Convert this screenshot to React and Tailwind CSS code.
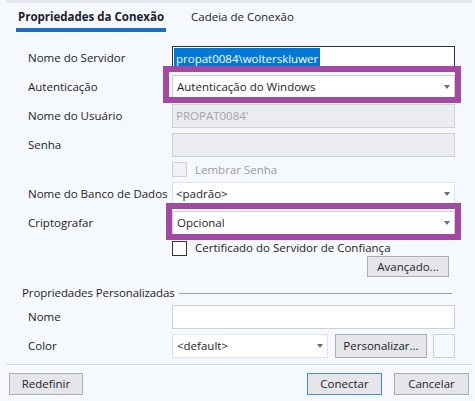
export default function App() {
    const arrow = (
        <span className="ml-auto mr-[4px] w-0 h-0 border-l-[3px] border-r-[3px] border-t-[4px] border-l-transparent border-r-transparent border-t-[#6f6f6f]" />
    );

    return (
        <div className="relative w-[475px] h-[401px] bg-[#f5f8fc] overflow-hidden font-['Open_Sans',sans-serif] text-[11.5px] text-[#1e1e1e]">
            <div className="ml-[6px] w-[466px] h-[3px] bg-[#e3e6ee]" />

            {/* tabs */}
            <div className="flex h-[29px] pl-[16px]">
                <div className="w-[150px] flex items-center justify-center pt-[2px] border-b-4 border-[#1b6ec2] font-bold text-[#1c1c2c]">
                    Propriedades da Conexão
                </div>
                <div className="ml-[25px] flex items-center pt-[2px] pb-[4px]">Cadeia de Conexão</div>
            </div>

            <div className="pl-[28px] mt-[14px]">
                <div className="flex items-center h-6">
                    <div className="w-[144px]">Nome do Servidor</div>
                    <div className="w-[283px] h-6 flex items-center bg-white border border-[#333] pl-[1px]">
                        <span className="h-[21px] leading-[21px] px-[2px] bg-[#0078d7] text-white">propat0084\wolterskluwer</span>
                    </div>
                </div>
                <div className="flex items-center h-6 mt-[5px]">
                    <div className="w-[144px]">Autenticação</div>
                    <div className="w-[283px] h-6 flex items-center bg-white border border-[#c9cdd5] pl-[4px]">
                        Autenticação do Windows
                        {arrow}
                    </div>
                </div>
                <div className="flex items-center h-6 mt-[5px]">
                    <div className="w-[144px]">Nome do Usuário</div>
                    <div className="w-[283px] h-6 flex items-center bg-[#ecebf0] border border-[#cdd0d8] pl-[3px] text-[#a3a3a8]">
                        PROPAT0084'
                    </div>
                </div>
                <div className="flex items-center h-6 mt-[5px]">
                    <div className="w-[144px]">Senha</div>
                    <div className="w-[283px] h-6 bg-[#ecebf0] border border-[#cdd0d8]" />
                </div>
                <div className="flex items-center h-[15px] mt-[5px] pl-[144px]">
                    <div className="w-[15px] h-[15px] border border-[#cfd1d6] bg-[#f1f1f3]" />
                    <div className="ml-[8px] text-[#9b9ba0]">Lembrar Senha</div>
                </div>
                <div className="flex items-center h-6 mt-[5px]">
                    <div className="w-[144px]">Nome do Banco de Dados</div>
                    <div className="w-[283px] h-6 flex items-center bg-white border border-[#dfe2e8] pl-[3px]">
                        &lt;padrão&gt;
                        {arrow}
                    </div>
                </div>
                <div className="flex items-center h-6 mt-[5px]">
                    <div className="w-[144px]">Criptografar</div>
                    <div className="w-[283px] h-6 flex items-center bg-white border border-[#c9cdd5] pl-[4px]">
                        Opcional
                        {arrow}
                    </div>
                </div>
                <div className="flex items-center h-[15px] mt-[6px] pl-[144px]">
                    <div className="w-[15px] h-[15px] border border-[#333] bg-white" />
                    <div className="ml-[8px] -mt-[2px]">Certificado do Servidor de Confiança</div>
                </div>
                <div className="flex justify-end w-[421px]">
                    <button className="w-[82px] h-[21px] bg-[#e5e5ea] border border-[#adadad]">Avançado...</button>
                </div>
            </div>

            {/* custom properties */}
            <div className="flex items-center w-[452px] h-[18px] mt-[7px] pl-[22px]">
                <span className="tracking-[-0.1px]">Propriedades Personalizadas</span>
                <div className="ml-[4px] flex-1 h-px bg-[#a0a0a0]" />
            </div>
            <div className="pl-[28px]">
                <div className="flex items-center h-6 mt-[3px]">
                    <div className="w-[144px]">Nome</div>
                    <div className="w-[283px] h-6 bg-white border border-[#cdd0d8]" />
                </div>
                <div className="flex items-center h-6 mt-[5px]">
                    <div className="w-[144px]">Color</div>
                    <div className="w-[156px] h-6 flex items-center bg-white border border-[#dfe2e8] pl-[4px]">
                        &lt;default&gt;
                        {arrow}
                    </div>
                    <button className="ml-[7px] w-[92px] h-6 bg-[#e5e5ea] border border-[#adadad]">Personalizar...</button>
                    <div className="ml-[6px] w-[22px] h-6 border border-[#cdd0d8]" />
                </div>
            </div>

            <div className="ml-[6px] mt-[6px] w-[466px] h-px bg-[#d5d9e1]" />

            <div className="flex items-center mt-[8px] h-[22px]">
                <button className="ml-[9px] w-[74px] h-[22px] bg-[#e5e5ea] border border-[#adadad]">Redefinir</button>
                <button className="ml-auto w-[75px] h-[22px] bg-[#e5e5ea] border border-[#3b8ee6]">Conectar</button>
                <button className="ml-[12px] mr-[6px] w-[75px] h-[22px] bg-[#e5e5ea] border border-[#adadad]">Cancelar</button>
            </div>

            {/* annotation boxes */}
            <div className="absolute left-[163px] top-[66px] w-[298px] h-[37px] border-[6px] border-[#a349a4]" />
            <div className="absolute left-[166px] top-[203px] w-[295px] h-[37px] border-[6px] border-[#a349a4]" />
        </div>
    );
}
